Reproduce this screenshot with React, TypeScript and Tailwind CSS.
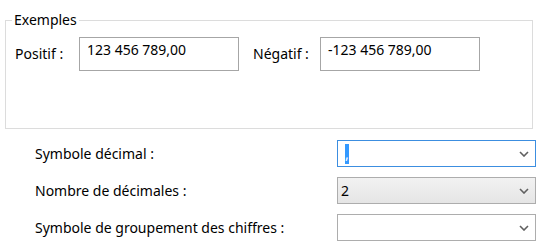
function Chevron() {
  return (
    <svg width="10" height="6" viewBox="0 0 10 6" className="shrink-0">
      <path d="M1 1 L5 5 L9 1" fill="none" stroke="#606060" strokeWidth="1.6" />
    </svg>
  );
}

function Select({ value, variant }: { value?: React.ReactNode; variant: "focus" | "gray" | "plain" }) {
  const box =
    variant === "focus"
      ? "border-[#3c8ee0] bg-white"
      : variant === "gray"
      ? "border-[#adadad] bg-gradient-to-b from-[#f2f2f2] to-[#e5e5e5]"
      : "border-[#adadad] bg-white";
  return (
    <div className={`w-[199px] h-[27px] border flex items-center pl-[3px] pr-[6px] ${box}`}>
      <div className="flex-1 text-black">{value}</div>
      <Chevron />
    </div>
  );
}

function Field({ text }: { text: string }) {
  return (
    <div className="w-[160px] h-[34px] border border-[#a6a6a6] px-[7px] pt-[3px] text-black">{text}</div>
  );
}

export default function App() {
  return (
    <div
      className="w-[546px] h-[250px] bg-white text-[14px] leading-[18px] text-black overflow-hidden"
      style={{ fontFamily: '"Noto Sans", "Open Sans", sans-serif' }}
    >
      <fieldset className="mt-[11px] ml-[5px] w-[528px] h-[118px] border border-[#dcdcdc] pl-[9px] pt-0">
        <legend className="px-[2px] ml-[-3px]">Exemples</legend>
        <div className="flex items-center mt-[8px]">
          <span className="w-[64px]">Positif :</span>
          <Field text="123 456 789,00" />
          <span className="ml-[14px] w-[67px]">Négatif :</span>
          <Field text="-123 456 789,00" />
        </div>
      </fieldset>

      <div className="mt-[11px] ml-[35px] flex flex-col gap-[10px]">
        <div className="flex items-center">
          <span className="w-[302px]">Symbole décimal :</span>
          <Select
            variant="focus"
            value={<span className="ml-[4px] inline-block w-[4px] h-[20px] bg-[#3399ff] text-white leading-[20px] align-middle">,</span>}
          />
        </div>
        <div className="flex items-center">
          <span className="w-[302px]">Nombre de décimales :</span>
          <Select variant="gray" value="2" />
        </div>
        <div className="flex items-center">
          <span className="w-[302px]">Symbole de groupement des chiffres :</span>
          <Select variant="plain" />
        </div>
      </div>
    </div>
  );
}
